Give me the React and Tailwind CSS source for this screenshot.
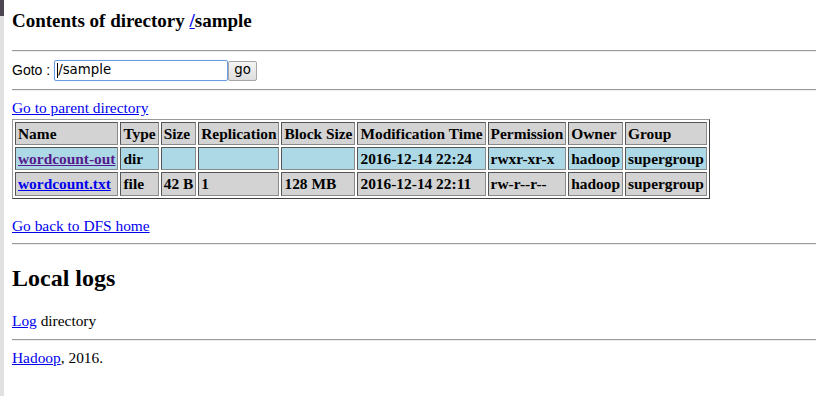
import React from "react";

const rows = [
  {
    name: "wordcount-out",
    visited: true,
    type: "dir",
    size: "",
    repl: "",
    block: "",
    time: "2016-12-14 22:24",
    perm: "rwxr-xr-x",
    owner: "hadoop",
    group: "supergroup",
    bg: "bg-[#add8e6]",
  },
  {
    name: "wordcount.txt",
    visited: false,
    type: "file",
    size: "42 B",
    repl: "1",
    block: "128 MB",
    time: "2016-12-14 22:11",
    perm: "rw-r--r--",
    owner: "hadoop",
    group: "supergroup",
    bg: "bg-[#d3d3d3]",
  },
];

function Hr({ className = "" }) {
  return <div className={"h-[2px] border-t border-t-[#9a9a9a] border-b border-b-[#eeeeee] " + className} />;
}

function Cell({ children, bg }) {
  return (
    <td className={"p-[2px] border border-t-[#555555] border-l-[#555555] border-r-[#8a8a8a] border-b-[#8a8a8a] text-left align-middle whitespace-nowrap " + bg}>
      {children}
    </td>
  );
}

export default function App() {
  const headers = ["Name", "Type", "Size", "Replication", "Block Size", "Modification Time", "Permission", "Owner", "Group"];
  return (
    <div className="flex min-h-[396px] bg-white text-black">
      <div className="w-[4px] shrink-0 bg-[#e0e0e0] flex flex-col">
        <div className="h-[16px] bg-[#4b4650]" />
      </div>
      <div className="flex-1 pl-[8px] flex flex-col font-['Liberation_Serif',serif] text-[15.4px] leading-[18.4px]">
        <h3 className="mt-[10px] text-[19px] leading-[21.5px] font-bold">
          Contents of directory <a href="#" className="text-[#0000ee] underline">/</a>sample
        </h3>
        <Hr className="mt-[18.5px]" />
        <div className="mt-[8px] h-[21px] flex items-center font-['Liberation_Sans',sans-serif] text-[14px]">
          <span className="mr-[4px]">Goto :</span>
          <div className="w-[174px] h-[21px] border border-[#6a9be6] rounded-[2px] flex items-center pl-[2px] font-['DejaVu_Sans',sans-serif] text-[13.33px] shadow-[0_0_1px_#9dbcf0]">
            <span className="w-px h-[15px] bg-black" />
            <span>/sample</span>
          </div>
          <div className="w-[29px] h-[20px] border border-[#a6a6a6] rounded-[2px] bg-gradient-to-b from-[#f4f4f4] to-[#dedede] flex items-center justify-center font-['DejaVu_Sans',sans-serif] text-[13.33px]">
            go
          </div>
        </div>
        <Hr className="mt-[8px]" />
        <div className="mt-[8px] h-[20px]">
          <a href="#" className="text-[#0000ee] underline">Go to parent directory</a>
        </div>
        <table className="self-start border-separate border-spacing-[2px] border border-t-[#9a9a9a] border-l-[#9a9a9a] border-r-[#404040] border-b-[#404040] font-bold text-[15.4px] leading-[17.2px]">
          <tbody>
            <tr>
              {headers.map((h) => (
                <Cell key={h} bg="bg-[#d3d3d3]">{h}</Cell>
              ))}
            </tr>
            {rows.map((r) => (
              <tr key={r.name}>
                <Cell bg={r.bg}>
                  <a href="#" className={(r.visited ? "text-[#551a8b]" : "text-[#0000ee]") + " underline"}>{r.name}</a>
                </Cell>
                <Cell bg={r.bg}>{r.type}</Cell>
                <Cell bg={r.bg}>{r.size}</Cell>
                <Cell bg={r.bg}>{r.repl}</Cell>
                <Cell bg={r.bg}>{r.block}</Cell>
                <Cell bg={r.bg}>{r.time}</Cell>
                <Cell bg={r.bg}>{r.perm}</Cell>
                <Cell bg={r.bg}>{r.owner}</Cell>
                <Cell bg={r.bg}>{r.group}</Cell>
              </tr>
            ))}
          </tbody>
        </table>
        <div className="mt-[18px]">
          <a href="#" className="text-[#0000ee] underline">Go back to DFS home</a>
        </div>
        <Hr className="mt-[8px]" />
        <h2 className="mt-[19.92px] text-[24px] leading-[27.6px] font-bold">Local logs</h2>
        <div className="mt-[19.92px]">
          <a href="#" className="text-[#0000ee] underline">Log</a> directory
        </div>
        <Hr className="mt-[8px]" />
        <div className="mt-[8px]">
          <a href="#" className="text-[#0000ee] underline">Hadoop</a>, 2016.
        </div>
      </div>
    </div>
  );
}
